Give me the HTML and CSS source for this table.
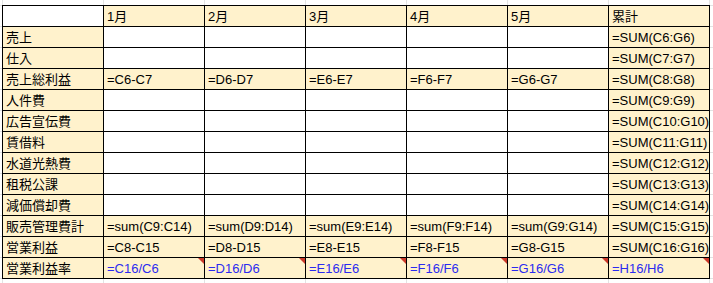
FILE: index.html
```html
<!DOCTYPE html>
<html lang="ja">
<head>
<meta charset="utf-8">
<title>損益計算</title>
<link rel="stylesheet" href="styles.css">
</head>
<body>
<div class="sheet">
  <div class="c"></div><div class="c y">1月</div><div class="c y">2月</div><div class="c y">3月</div><div class="c y">4月</div><div class="c y">5月</div><div class="c y">累計</div>

  <div class="c y">売上</div><div class="c"></div><div class="c"></div><div class="c"></div><div class="c"></div><div class="c"></div><div class="c y">=SUM(C6:G6)</div>

  <div class="c y">仕入</div><div class="c"></div><div class="c"></div><div class="c"></div><div class="c"></div><div class="c"></div><div class="c y">=SUM(C7:G7)</div>

  <div class="c y">売上総利益</div><div class="c y">=C6-C7</div><div class="c y">=D6-D7</div><div class="c y">=E6-E7</div><div class="c y">=F6-F7</div><div class="c y">=G6-G7</div><div class="c y">=SUM(C8:G8)</div>

  <div class="c y">人件費</div><div class="c"></div><div class="c"></div><div class="c"></div><div class="c"></div><div class="c"></div><div class="c y">=SUM(C9:G9)</div>

  <div class="c y">広告宣伝費</div><div class="c"></div><div class="c"></div><div class="c"></div><div class="c"></div><div class="c"></div><div class="c y">=SUM(C10:G10)</div>

  <div class="c y">賃借料</div><div class="c"></div><div class="c"></div><div class="c"></div><div class="c"></div><div class="c"></div><div class="c y">=SUM(C11:G11)</div>

  <div class="c y">水道光熱費</div><div class="c"></div><div class="c"></div><div class="c"></div><div class="c"></div><div class="c"></div><div class="c y">=SUM(C12:G12)</div>

  <div class="c y">租税公課</div><div class="c"></div><div class="c"></div><div class="c"></div><div class="c"></div><div class="c"></div><div class="c y">=SUM(C13:G13)</div>

  <div class="c y">減価償却費</div><div class="c"></div><div class="c"></div><div class="c"></div><div class="c"></div><div class="c"></div><div class="c y">=SUM(C14:G14)</div>

  <div class="c y">販売管理費計</div><div class="c y">=sum(C9:C14)</div><div class="c y">=sum(D9:D14)</div><div class="c y">=sum(E9:E14)</div><div class="c y">=sum(F9:F14)</div><div class="c y">=sum(G9:G14)</div><div class="c y">=SUM(C15:G15)</div>

  <div class="c y">営業利益</div><div class="c y">=C8-C15</div><div class="c y">=D8-D15</div><div class="c y">=E8-E15</div><div class="c y">=F8-F15</div><div class="c y">=G8-G15</div><div class="c y">=SUM(C16:G16)</div>

  <div class="c y">営業利益率</div><div class="c y b err">=C16/C6</div><div class="c y b err">=D16/D6</div><div class="c y b err">=E16/E6</div><div class="c y b err">=F16/F6</div><div class="c y b err">=G16/G6</div><div class="c y b err">=H16/H6</div>
</div>
</body>
</html>
```

FILE: styles.css
```css
html, body {
  margin: 0;
  padding: 0;
}

body {
  width: 713px;
  height: 283px;
  overflow: hidden;
  background-color: #ffffff;
  background-image:
    linear-gradient(to right, #e2e3e3 1px, transparent 1px),
    linear-gradient(to bottom, #e2e3e3 1px, transparent 1px);
  background-size: 101px 21px;
  background-position: 2px 5px;
  font-family: "Liberation Sans", Arial, "Noto Sans CJK JP", sans-serif;
  font-size: 13px;
  color: #000000;
}

.sheet {
  margin: 5px 0 0 2px;
  width: 708px;
  display: grid;
  grid-template-columns: repeat(7, 100px);
  grid-auto-rows: 20px;
  gap: 1px;
  padding: 1px;
  box-sizing: border-box;
  background: #000000;
}

.c {
  position: relative;
  background: #ffffff;
  padding: 1px 0 0 3px;
  line-height: 19px;
  white-space: nowrap;
  overflow: hidden;
}

.y {
  background: #fff2cc;
}

.b {
  color: #2b2bf0;
}

.err::after {
  content: "";
  position: absolute;
  top: 0;
  right: 0;
  width: 0;
  height: 0;
  border-top: 6px solid #cc3a2a;
  border-left: 6px solid transparent;
}
```
